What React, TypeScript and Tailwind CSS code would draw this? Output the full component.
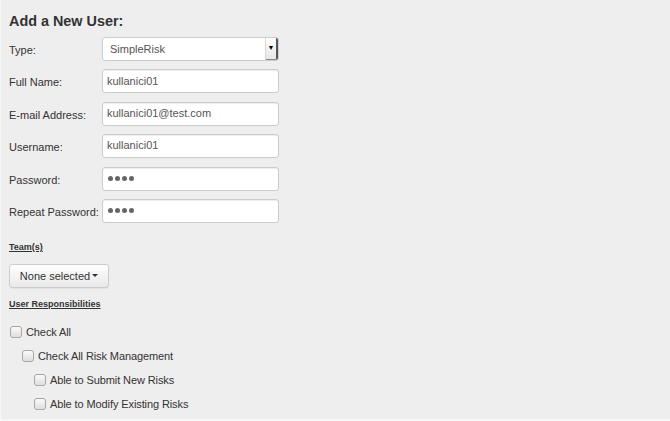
import React from "react";

const font = { fontFamily: '"Liberation Sans", Arial, Helvetica, sans-serif' };

function Row({ label, children }: { label: string; children: React.ReactNode }) {
  return (
    <div className="flex items-center h-[24px]">
      <div className="w-[93px] text-[11px] text-[#333] leading-none pt-[3px]">{label}</div>
      {children}
    </div>
  );
}

function TextInput({ value, password }: { value: string; password?: boolean }) {
  return (
    <div className="w-[177px] h-[24px] bg-white border border-[#cccccc] rounded-[3px] shadow-[inset_0_1px_1px_rgba(0,0,0,0.075)] flex items-center pl-[4px] pb-[1px] text-[11px] text-[#555]">
      {password ? (
        <span className="flex gap-[2px] pl-[1px]">
          <span className="w-[5px] h-[5px] rounded-full bg-[#666]" />
          <span className="w-[5px] h-[5px] rounded-full bg-[#666]" />
          <span className="w-[5px] h-[5px] rounded-full bg-[#666]" />
          <span className="w-[5px] h-[5px] rounded-full bg-[#666]" />
        </span>
      ) : (
        value
      )}
    </div>
  );
}

function Check({ label, indent }: { label: string; indent: number }) {
  return (
    <div className="flex items-center h-[24px]" style={{ paddingLeft: indent }}>
      <span className="w-[12px] h-[12px] rounded-[3px] border border-[#a8a8a8] bg-gradient-to-b from-[#fafafa] to-[#dedede] mr-[4px]" />
      <span className="text-[11px] text-[#333] tracking-[-0.1px]">{label}</span>
    </div>
  );
}

export default function App() {
  return (
    <div
      className="w-[670px] h-[421px] bg-[#eeeeee] border-l border-b-2 border-[#f7f7f7] overflow-hidden pl-[8px]"
      style={font}
    >
      <div className="pt-[12px] text-[14.4px] font-bold text-[#333] leading-[18px]">Add a New User:</div>
      <div className="mt-[7px] flex flex-col gap-[8.4px]">
        <Row label="Type:">
          <div className="w-[177px] h-[24px] bg-white border border-[#cccccc] rounded-[3px] flex items-center justify-between text-[11px] text-[#555]">
            <span className="pl-[7px]">SimpleRisk</span>
            <span className="w-[13px] h-[22px] border-l border-[#d8d8d8] bg-gradient-to-b from-[#ffffff] to-[#e6e6e6] border-r-2 border-r-[#555] border-b border-b-[#888] rounded-r-[2px] flex items-center justify-center text-[7px] text-black">▼</span>
          </div>
        </Row>
        <Row label="Full Name:">
          <TextInput value="kullanici01" />
        </Row>
        <Row label="E-mail Address:">
          <TextInput value="kullanici01@test.com" />
        </Row>
        <Row label="Username:">
          <TextInput value="kullanici01" />
        </Row>
        <Row label="Password:">
          <TextInput value="" password />
        </Row>
        <Row label="Repeat Password:">
          <TextInput value="" password />
        </Row>
      </div>
      <div className="mt-[18px] text-[9px] font-bold underline text-[#333] leading-[12px]">Team(s)</div>
      <div className="mt-[11px] w-[100px] h-[24px] rounded-[3px] border border-[#cccccc] bg-gradient-to-b from-[#ffffff] to-[#e8e8e8] shadow-[0_1px_1px_rgba(0,0,0,0.05)] flex items-center justify-center text-[11px] text-[#333]">
        None selected
        <span className="ml-[2px] inline-block w-0 h-0 border-l-[3px] border-r-[3px] border-t-[3px] border-l-transparent border-r-transparent border-t-[#333]" />
      </div>
      <div className="mt-[10px] text-[9px] font-bold underline text-[#333] leading-[12px]">User Responsibilities</div>
      <div className="mt-[10px]">
        <Check label="Check All" indent={1} />
        <Check label="Check All Risk Management" indent={13} />
        <Check label="Able to Submit New Risks" indent={25} />
        <Check label="Able to Modify Existing Risks" indent={25} />
      </div>
    </div>
  );
}
